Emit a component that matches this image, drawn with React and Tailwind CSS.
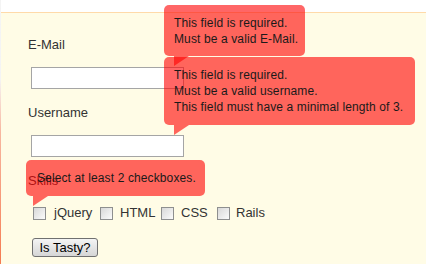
import React from 'react';

const Tip = ({ className, arrowClass, children }) => (
    <div className={`absolute ${className}`}>
        <div className="h-full whitespace-nowrap rounded-[5px] bg-[rgba(255,0,0,0.6)] text-[12px] leading-4 tracking-[0.12px] text-[#1a1a1a]">
            {children}
        </div>
        <div className={`absolute top-full h-0 w-0 border-t-[10px] border-r-[15px] border-t-[rgba(255,0,0,0.6)] border-r-transparent ${arrowClass}`} />
    </div>
);

const Box = ({ className = '' }) => (
    <span className={`inline-block h-[13px] w-[13px] shrink-0 border border-[#8e8f8f] bg-gradient-to-br from-[#d8d8d8] to-[#fbfbfb] ${className}`} />
);

export default function App() {
    return (
        <div className="relative flex h-[264px] w-[426px] overflow-hidden bg-white font-['Liberation_Sans',Arial,sans-serif]">
            <div className="w-px bg-gradient-to-b from-[#f4f4f4] from-30% via-[#f7b7a0] via-50% to-[#f47a50]" />
            <div className="flex flex-1 flex-col">
                <div className="h-3 bg-white" />
                <div className="flex-1 border-t border-[#ffdaa9] bg-[#fffce6] pl-[27px] pt-[24px] text-[13px] leading-4 text-[#333]">
                    <label className="block">E-Mail</label>
                    <input className="ml-[3px] mt-[14px] block h-[22px] w-[153px] border border-[#a5a5a5] bg-white outline-none" />
                    <label className="mt-[16px] block">Username</label>
                    <input className="ml-[3px] mt-[14px] block h-[22px] w-[153px] border border-[#a5a5a5] bg-white outline-none" />
                    <label className="mt-[16px] block">Skills</label>
                    <div className="ml-[5px] mt-[16px] flex h-4 items-center">
                        <Box />
                        <span className="ml-[8px] w-[46px] shrink-0">jQuery</span>
                        <Box />
                        <span className="ml-[7px] w-[41px] shrink-0">HTML</span>
                        <Box />
                        <span className="ml-[7px] w-[36px] shrink-0">CSS</span>
                        <Box />
                        <span className="ml-[6px]">Rails</span>
                    </div>
                    <button className="ml-[4px] mt-[17px] block h-[19px] w-[66px] rounded-[3px] border border-[#707070] bg-gradient-to-b from-[#f4f4f4] to-[#d6d6d6] text-[13px] leading-4 text-black">
                        Is Tasty?
                    </button>
                </div>
            </div>

            <Tip className="left-[164px] top-[5px] h-[51px] w-[141px]" arrowClass="left-[10px]">
                <div className="px-[10px] pt-[10px]">
                    <div>This field is required.</div>
                    <div>Must be a valid E-Mail.</div>
                </div>
            </Tip>
            <Tip className="left-[164px] top-[57px] h-[68px] w-[251px]" arrowClass="left-[10px]">
                <div className="px-[10px] pt-[10px]">
                    <div>This field is required.</div>
                    <div>Must be a valid username.</div>
                    <div>This field must have a minimal length of 3.</div>
                </div>
            </Tip>
            <Tip className="left-[26px] top-[160px] h-[36px] w-[179px]" arrowClass="left-[7px]">
                <div className="pl-[11px] pt-[10px]">Select at least 2 checkboxes.</div>
            </Tip>
        </div>
    );
}
